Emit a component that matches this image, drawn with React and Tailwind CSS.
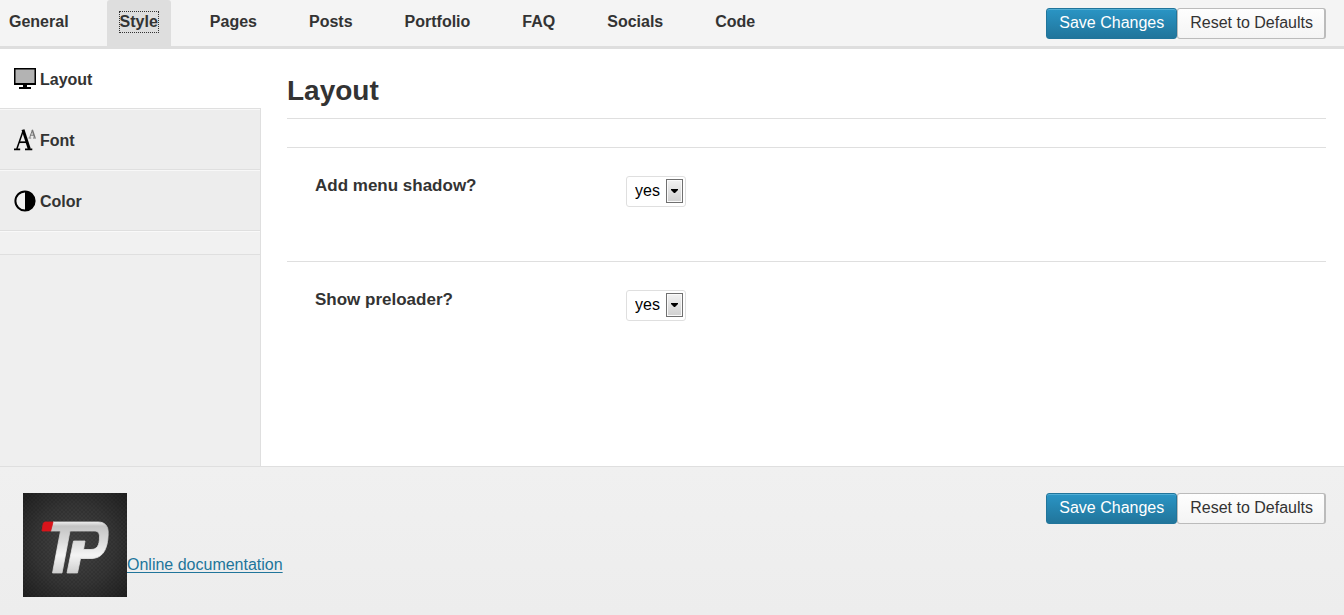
import React, { useState } from "react";

const TABS = ["General", "Style", "Pages", "Posts", "Portfolio", "FAQ", "Socials", "Code"];

function MonitorIcon() {
  return (
    <svg width="22" height="22" viewBox="0 0 22 22" aria-hidden="true">
      <rect x="0.75" y="0.75" width="20.5" height="15.5" fill="#b3b3b3" stroke="#000" strokeWidth="1.5" />
      <path d="M0 15h22v2H0z M9 17h4v2H9z M5 19h12v2H5z" fill="#000" />
    </svg>
  );
}

function FontIcon() {
  return (
    <svg width="22" height="22" viewBox="0 0 22 22" aria-hidden="true">
      <g fill="none" stroke="#000">
        <path d="M2.8 20 9 2.2" strokeWidth="1.5" />
        <path d="M9 0.6 15.3 20" strokeWidth="3" />
        <path d="M5 13.2h7.5" strokeWidth="1.7" />
        <path d="M0 20.4h6.2M11 20.4h7.3" strokeWidth="1.6" />
      </g>
      <g fill="none" stroke="#777">
        <path d="M15.7 8.5 18.2 1.6" strokeWidth="1" />
        <path d="M18.2 0.8 20.8 8.5" strokeWidth="1.6" />
        <path d="M16.4 6.2h3.2M14.6 9h2.6M19 9h3" strokeWidth="1" />
      </g>
    </svg>
  );
}

function ContrastIcon() {
  return (
    <svg width="22" height="22" viewBox="0 0 22 22" aria-hidden="true">
      <circle cx="11" cy="11" r="9.6" fill="#f1f1f1" stroke="#000" strokeWidth="2" />
      <path d="M11 1.500a9.5 9.5 0 0 1 0 19z" fill="#000" />
    </svg>
  );
}

const SECTIONS = [
  { name: "Layout", Icon: MonitorIcon },
  { name: "Font", Icon: FontIcon },
  { name: "Color", Icon: ContrastIcon },
];

function Actions() {
  return (
    <div className="flex shrink-0">
      <button
        type="button"
        className="rounded-[3px] border border-[#21759b] bg-linear-to-b from-[#2a95c5] to-[#21759b] px-3 pt-0.5 pb-[3px] leading-6 text-white shadow-[inset_0_1px_0_rgba(120,200,230,0.5)]"
      >
        Save Changes
      </button>
      <button
        type="button"
        className="rounded-[3px] border border-r-2 border-[#bbb] bg-linear-to-b from-[#fefefe] to-[#f4f4f4] pt-0.5 pr-[11px] pb-[3px] pl-3 leading-6 text-[#333]"
      >
        Reset to Defaults
      </button>
    </div>
  );
}

function SelectRow({ id, label }) {
  return (
    <div className="flex items-start border-t border-[#dfdfdf] pt-7 pb-[54px] pl-7">
      <label htmlFor={id} className="w-[311px] text-[17px] leading-5 font-bold text-[#333]">
        {label}
      </label>
      <div className="relative">
        <select
          id={id}
          defaultValue="yes"
          className="block h-[31px] w-[60px] appearance-none rounded-[3px] border border-[#dfdfdf] bg-white pr-5 pb-0.5 pl-2 text-base leading-6 text-black"
        >
          <option value="yes">yes</option>
          <option value="no">no</option>
        </select>
        <span className="pointer-events-none absolute top-[3px] right-[3px] flex h-6 w-[17px] items-center justify-center border border-[#707070] bg-linear-to-b from-[#f2f2f2] to-[#d0d0d0] shadow-[inset_0_0_0_1px_#fafafa]">
          <svg width="7" height="4" viewBox="0 0 7 4" aria-hidden="true">
            <path d="M0 0h7v1L4 4H3L0 1z" fill="#000" />
          </svg>
        </span>
      </div>
    </div>
  );
}

function Logo() {
  return (
    <svg width="104" height="104" viewBox="0 0 104 104" role="img" aria-label="TP">
      <defs>
        <radialGradient id="logoBack" cx="50%" cy="50%" r="70%">
          <stop offset="0" stopColor="#444" />
          <stop offset="0.55" stopColor="#353535" />
          <stop offset="1" stopColor="#202020" />
        </radialGradient>
        <pattern id="logoWeave" width="4" height="4" patternUnits="userSpaceOnUse">
          <path d="M0 0h2v2H0zM2 2h2v2H2z" fill="#000" opacity="0.1" />
        </pattern>
        <linearGradient id="logoMetal" x1="0" y1="29" x2="0" y2="80" gradientUnits="userSpaceOnUse">
          <stop offset="0" stopColor="#ececec" />
          <stop offset="0.08" stopColor="#c4c4c4" />
          <stop offset="0.35" stopColor="#d8d8d8" />
          <stop offset="0.65" stopColor="#f4f4f4" />
          <stop offset="1" stopColor="#cfcfcf" />
        </linearGradient>
      </defs>
      <rect width="104" height="104" fill="url(#logoBack)" />
      <rect width="104" height="104" fill="url(#logoWeave)" />
      <path
        d="M30 29h45c7 0 10.500 4 10.200 11.500C84.800 56 80 65.500 68 65.500H57.500L54.500 80H44l6.500-32H62l-1.500 8.500H68c6 0 8.500-4 8.500-12.500 0-4-1.500-6-5.500-6H47l-8 42h-9.500L37.500 38h-9.800z"
        fill="url(#logoMetal)"
        stroke="url(#logoMetal)"
        strokeWidth="0.8"
      />
      <path d="M21.500 29H30l-2.300 9H19l1.200-7.500z" fill="#d9141b" stroke="#d9141b" strokeWidth="0.8" />
    </svg>
  );
}

export default function App() {
  const [tab, setTab] = useState("Style");
  const [section, setSection] = useState("Layout");

  return (
    <div className="flex min-h-screen flex-col bg-white font-['Liberation_Sans',Arial,sans-serif] text-base text-[#333]">
      <header className="flex items-start justify-between border-b-3 border-[#dedede] bg-[#f4f4f4] pr-[18px]">
        <nav className="flex gap-[26px]">
          {TABS.map((name, i) => (
            <button
              key={name}
              type="button"
              onClick={() => setTab(name)}
              className={`h-[46px] rounded-t-[3px] pb-0.5 font-bold ${i === 0 ? "pr-3 pl-[9px]" : "px-[13px]"} ${
                tab === name ? "bg-[#dedede]" : ""
              }`}
            >
              <span className={`block leading-5 ${tab === name ? "outline-1 outline-[#333] outline-dotted" : ""}`}>
                {name}
              </span>
            </button>
          ))}
        </nav>
        <div className="pt-2">
          <Actions />
        </div>
      </header>

      <main className="flex flex-1">
        <nav className="flex w-[261px] shrink-0 flex-col">
          {SECTIONS.map(({ name, Icon }) => (
            <button
              key={name}
              type="button"
              onClick={() => setSection(name)}
              className={`flex items-center gap-1 border-b border-b-[#dfdfdf] pl-[14px] font-bold ${
                section === name
                  ? "h-[60px] bg-white pt-px"
                  : "h-[61px] border-r border-r-[#dfdfdf] bg-[#ededed] pt-0.5 shadow-[inset_0_1px_0_#f8f8f8]"
              }`}
            >
              <Icon />
              <span className="pt-0.5 leading-5">{name}</span>
            </button>
          ))}
          <div className="h-6 border-r border-b border-[#dfdfdf] bg-[#f1f1f1] shadow-[inset_0_1px_0_#f9f9f9]" />
          <div className="flex-1 border-r border-[#dfdfdf] bg-[#efefef]" />
        </nav>

        <section className="flex-1 pt-6 pr-[18px] pl-[26px]">
          <h1 className="pt-px pb-2.5 text-[28px] leading-[34px] font-bold">Layout</h1>
          <div className="h-[29px] border-t border-[#dfdfdf]" />
          <SelectRow id="menu-shadow" label="Add menu shadow?" />
          <SelectRow id="preloader" label="Show preloader?" />
        </section>
      </main>

      <footer className="flex items-start justify-between border-t border-[#dfdfdf] bg-linear-to-b from-[#f0f0f0] to-[#ededed] pt-[26px] pr-[18px] pb-[18px] pl-[23px]">
        <div className="flex items-end">
          <Logo />
          <a href="#documentation" className="pb-5 leading-6 text-[#21759b] underline underline-offset-2">
            Online documentation
          </a>
        </div>
        <Actions />
      </footer>
    </div>
  );
}
